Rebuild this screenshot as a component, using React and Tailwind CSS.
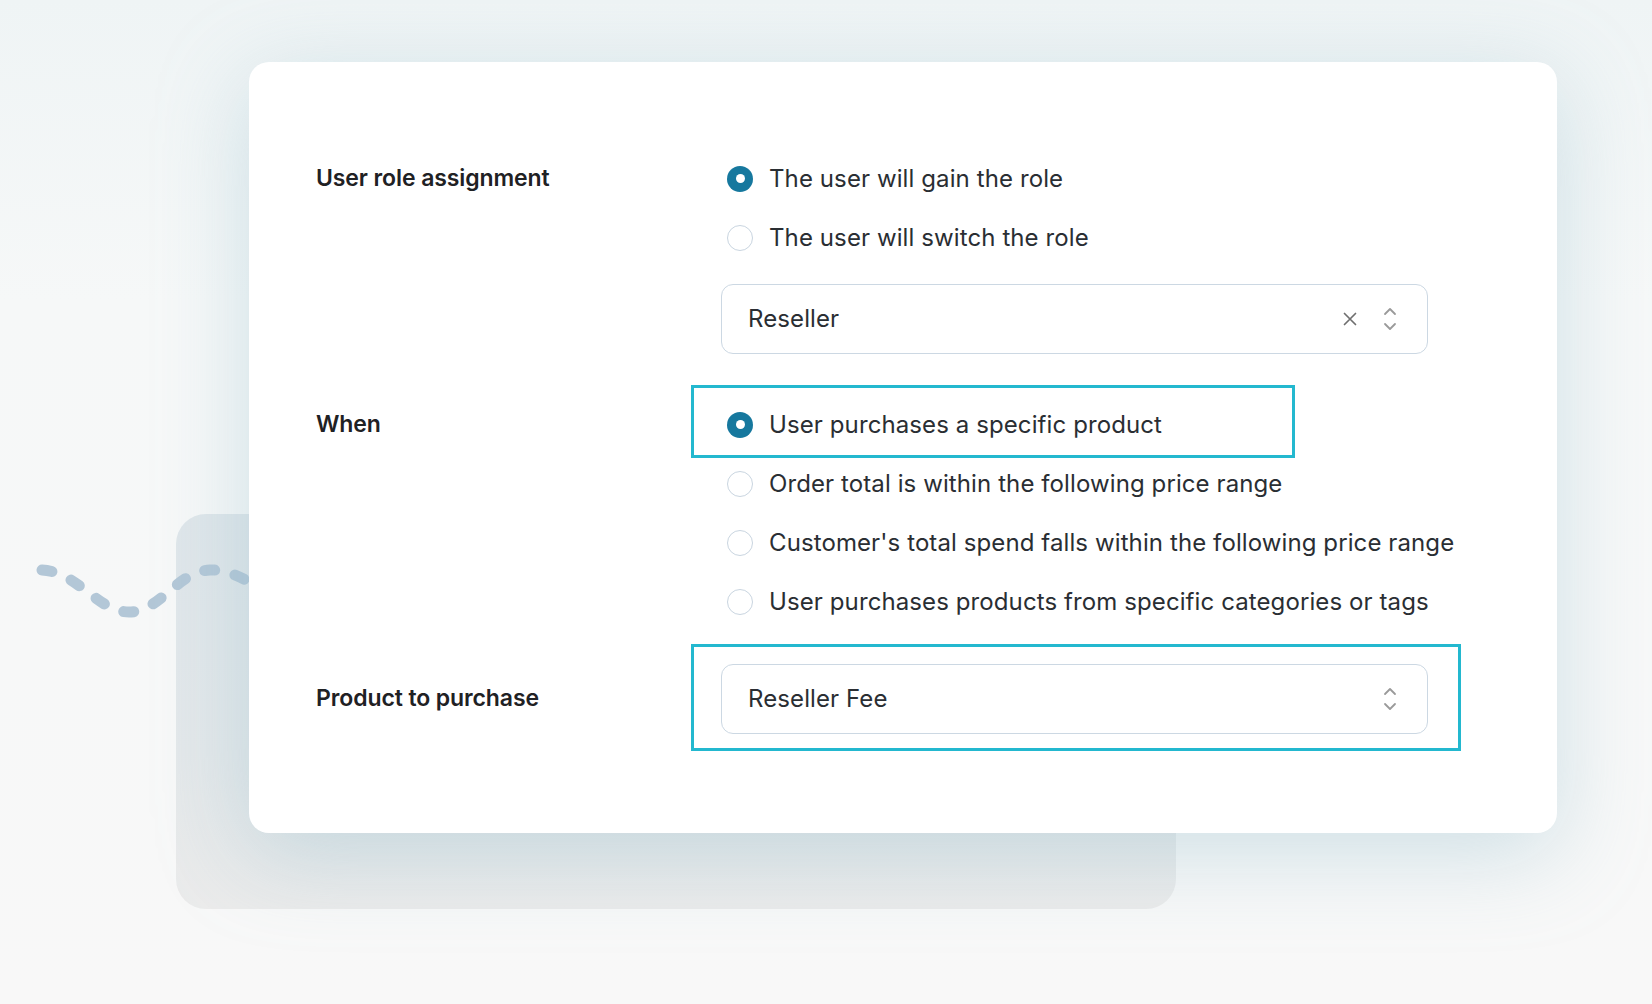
import React from "react";

const font = { fontFamily: "Inter, 'Noto Sans', 'Liberation Sans', sans-serif" };

function Radio({ checked }) {
  if (checked) {
    return (
      <span className="flex h-[26px] w-[26px] shrink-0 items-center justify-center rounded-full bg-[#16789e]">
        <span className="h-[9px] w-[9px] rounded-full bg-white" />
      </span>
    );
  }
  return <span className="h-[26px] w-[26px] shrink-0 rounded-full border-[1.5px] border-[#c9d5e0] bg-white" />;
}

function Option({ checked, children, highlight }) {
  return (
    <div className="relative flex h-[59px] items-center pl-[6px]">
      {highlight && (
        <div className="pointer-events-none absolute left-[-30px] top-[-10px] h-[73px] w-[604px] border-[3px] border-[#23b8cf]" />
      )}
      <Radio checked={checked} />
      <span className="ml-[16px] whitespace-nowrap text-[24px] tracking-[0.1px] text-[#2a2e33]">{children}</span>
    </div>
  );
}

function Chevrons() {
  return (
    <svg width="14" height="26" viewBox="0 0 14 26" fill="none" stroke="#9a9a9a" strokeWidth="1.8" strokeLinecap="round" strokeLinejoin="round">
      <path d="M2 8 L7 3 L12 8" />
      <path d="M2 18 L7 23 L12 18" />
    </svg>
  );
}

function Select({ value, clearable }) {
  return (
    <div className="flex h-[70px] w-[707px] items-center rounded-[12px] border-[1.5px] border-[#ccd8e3] bg-white pl-[26px] pr-[30px]">
      <span className="flex-1 text-[24px] tracking-[0.1px] text-[#2a2e33]">{value}</span>
      {clearable && (
        <svg className="mr-[26px]" width="14" height="14" viewBox="0 0 14 14" fill="none" stroke="#6f6f6f" strokeWidth="1.7" strokeLinecap="round">
          <path d="M1.5 1.5 L12.5 12.5 M12.5 1.5 L1.5 12.5" />
        </svg>
      )}
      <Chevrons />
    </div>
  );
}

function Label({ children }) {
  return <div className="flex h-[59px] items-center whitespace-nowrap text-[23px] font-semibold tracking-[-0.1px] text-[#1f2124]">{children}</div>;
}

export default function App() {
  return (
    <div
      className="relative h-[1004px] w-full overflow-hidden bg-[linear-gradient(180deg,#eff4f5_0%,#f6f8f8_30%,#f8f8f8_100%)] pl-[249px] pt-[62px]"
      style={font}
    >
      {/* back card */}
      <div className="absolute left-[176px] top-[514px] h-[395px] w-[1000px] rounded-[30px] bg-[linear-gradient(180deg,#dfe6ea_0%,#e4e8ea_60%,#ebebeb_100%)]" />
      {/* dashed wave */}
      <svg className="absolute left-0 top-[530px]" width="320" height="120" viewBox="0 530 320 120" fill="none">
        <path
          d="M42 570 C 78 572, 98 612, 129 612 C 160 612, 178 571, 210 570 C 240 569, 262 595, 300 605"
          stroke="#b3c7d7"
          strokeWidth="11"
          strokeLinecap="round"
          strokeDasharray="10 21"
        />
      </svg>
      {/* main card */}
      <div className="relative h-[771px] w-[1308px] rounded-[20px] bg-white pl-[67px] pt-[87px] shadow-[0_20px_90px_rgba(140,185,200,0.38)]">
        <div className="grid grid-cols-[405px_707px]">
          <Label>User role assignment</Label>
          <div className="flex flex-col">
            <Option checked>The user will gain the role</Option>
            <Option>The user will switch the role</Option>
            <div className="mt-[17px]">
              <Select value="Reseller" clearable />
            </div>
          </div>

          <div className="mt-[41px]">
            <Label>When</Label>
          </div>
          <div className="mt-[41px] flex flex-col">
            <Option checked highlight>User purchases a specific product</Option>
            <Option>Order total is within the following price range</Option>
            <Option>Customer's total spend falls within the following price range</Option>
            <Option>User purchases products from specific categories or tags</Option>
          </div>

          <div className="mt-[38px]">
            <Label>Product to purchase</Label>
          </div>
          <div className="relative mt-[33px]">
            <div className="pointer-events-none absolute left-[-30px] top-[-20px] h-[107px] w-[770px] border-[3px] border-[#23b8cf]" />
            <Select value="Reseller Fee" />
          </div>
        </div>
      </div>
    </div>
  );
}
